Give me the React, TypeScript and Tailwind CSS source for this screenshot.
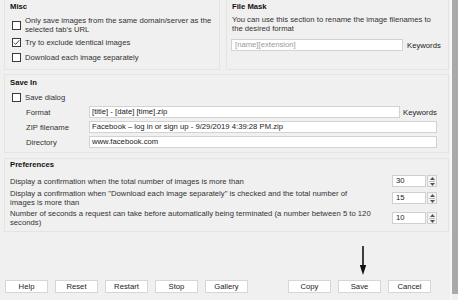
import React from "react";

function Check({ checked = false }: { checked?: boolean }) {
  return (
    <div className="w-[9px] h-[9px] shrink-0 border border-[#3a3a3a] bg-white flex items-center justify-center">
      {checked && (
        <svg width="7" height="7" viewBox="0 0 7 7">
          <path d="M0.8 3.6 L2.7 5.4 L6.3 1.2" fill="none" stroke="#333" strokeWidth="0.9" />
        </svg>
      )}
    </div>
  );
}

function Spin({ value }: { value: string }) {
  return (
    <div className="flex items-stretch h-[12px] w-[45px] shrink-0">
      <div className="w-[34px] border border-[#cfcfcf] bg-white pl-[3px] leading-[10px] text-[#222]">{value}</div>
      <div className="ml-[1px] w-[10px] border border-[#cfcfcf] bg-[#f4f4f4] flex flex-col items-center justify-center gap-[1px]">
        <svg width="5" height="3" viewBox="0 0 5 3"><path d="M0 3 L2.5 0 L5 3Z" fill="#555" /></svg>
        <div className="w-[6px] h-px bg-[#bbb]" />
        <svg width="5" height="3" viewBox="0 0 5 3"><path d="M0 0 L2.5 3 L5 0Z" fill="#555" /></svg>
      </div>
    </div>
  );
}

function Btn({ label }: { label: string }) {
  return (
    <div className="w-[43px] h-[13px] bg-white border border-[#d6d6d6] flex items-center justify-center text-[#222] leading-[11px]">
      {label}
    </div>
  );
}

export default function App() {
  return (
    <div className="w-[458px] h-[300px] bg-[#f0f0f0] flex overflow-hidden text-[7.7px] leading-[9px] text-[#333] font-[family-name:Liberation_Sans,Arial,sans-serif] relative">
      <div className="w-[450px] flex flex-col pl-[4px] pr-[1px]">
        {/* Top row */}
        <div className="flex gap-[6px] h-[70px]">
          <div className="w-[216px] border-b border-r border-l border-[#e4e4e4] pl-[5px]">
            <div className="mt-[2px] h-[10px] leading-[10px] font-bold text-[#111]">Misc</div>
            <div className="mt-[4px] flex items-center gap-[4px] pl-[2px]">
              <Check />
              <div className="whitespace-nowrap">
                Only save images from the same domain/server as the
                <br />
                selected tab's URL
              </div>
            </div>
            <div className="mt-[4px] flex items-center gap-[4px] pl-[2px] h-[9px]">
              <Check checked />
              <div className="whitespace-nowrap">Try to exclude identical images</div>
            </div>
            <div className="mt-[6px] flex items-center gap-[4px] pl-[2px] h-[9px]">
              <Check />
              <div className="whitespace-nowrap">Download each image separately</div>
            </div>
          </div>
          <div className="w-[223px] border-b border-r border-l border-[#e4e4e4] pl-[5px]">
            <div className="mt-[2px] h-[10px] leading-[10px] font-bold text-[#111]">File Mask</div>
            <div className="mt-[3px] whitespace-nowrap">
              You can use this section to rename the image filenames to
              <br />
              the desired format
            </div>
            <div className="mt-[6px] flex items-center gap-[4px] ml-[-1px]">
              <div className="w-[172px] h-[12px] bg-white border border-[#d2d2d2] pl-[3px] leading-[10px] text-[#9a9a9a]">
                [name][extension]
              </div>
              <div className="text-[#222]">Keywords</div>
            </div>
          </div>
        </div>

        {/* Save In */}
        <div className="mt-[4px] border border-[#e4e4e4] pl-[5px] pb-[4px]">
          <div className="mt-[3px] h-[10px] leading-[10px] font-bold text-[#111]">Save In</div>
          <div className="mt-[4px] h-[10px] flex items-center gap-[4px] pl-[2px]">
            <Check />
            <div>Save dialog</div>
          </div>
          <div className="mt-[4px] flex items-center h-[12px]">
            <div className="w-[79px] pl-[16px] shrink-0 whitespace-nowrap">Format</div>
            <div className="w-[311px] h-[12px] bg-white border border-[#d2d2d2] pl-[2px] leading-[10px] text-[#222] whitespace-nowrap">
              [title] - [date] [time].zip
            </div>
            <div className="ml-[3px] text-[#222]">Keywords</div>
          </div>
          <div className="mt-[3px] flex items-center h-[12px]">
            <div className="w-[79px] pl-[16px] shrink-0 whitespace-nowrap">ZIP filename</div>
            <div className="w-[348px] h-[12px] bg-white border border-[#d2d2d2] pl-[2px] leading-[10px] text-[#222] whitespace-nowrap">
              Facebook – log in or sign up - 9/29/2019 4:39:28 PM.zip
            </div>
          </div>
          <div className="mt-[3px] flex items-center h-[12px]">
            <div className="w-[79px] pl-[16px] shrink-0 whitespace-nowrap">Directory</div>
            <div className="w-[348px] h-[12px] bg-white border border-[#d2d2d2] pl-[2px] leading-[10px] text-[#222] whitespace-nowrap">
              www.facebook.com
            </div>
          </div>
        </div>

        {/* Preferences */}
        <div className="mt-[5px] border border-[#e4e4e4] pl-[5px] pr-[11px] pb-[4px]">
          <div className="mt-[1px] h-[9px] leading-[9px] font-bold text-[#111]">Preferences</div>
          <div className="mt-[6px] h-[12px] flex items-center justify-between">
            <div className="whitespace-nowrap">Display a confirmation when the total number of images is more than</div>
            <Spin value="30" />
          </div>
          <div className="mt-[2px] h-[18px] flex items-center justify-between">
            <div className="whitespace-nowrap">
              Display a confirmation when "Download each image separately" is checked and the total number of
              <br />
              images is more than
            </div>
            <Spin value="15" />
          </div>
          <div className="mt-[2px] h-[18px] flex items-center justify-between">
            <div className="whitespace-nowrap">
              Number of seconds a request can take before automatically being terminated (a number between 5 to 120
              <br />
              seconds)
            </div>
            <Spin value="10" />
          </div>
        </div>

        <div className="flex-1" />

        {/* Buttons */}
        <div className="mb-[7px] ml-[1px] flex items-center">
          <div className="flex gap-[7px]">
            <Btn label="Help" />
            <Btn label="Reset" />
            <Btn label="Restart" />
            <Btn label="Stop" />
            <Btn label="Gallery" />
          </div>
          <div className="ml-[40px] flex gap-[7px]">
            <Btn label="Copy" />
            <Btn label="Save" />
            <Btn label="Cancel" />
          </div>
        </div>
      </div>

      {/* scrollbar */}
      <div className="w-[2px] bg-[#f7f7f7]" />
      <div className="w-[6px] flex flex-col">
        <div className="flex-1 bg-[#a9a9a9]" />
        <div className="h-[6px] bg-[#f0f0f0]" />
      </div>

      {/* annotation arrow */}
      <svg className="absolute left-[358px] top-[246px]" width="10" height="30" viewBox="0 0 10 30">
        <path d="M5 0 L5 22" stroke="#111" strokeWidth="1.6" />
        <path d="M1.8 19 L5 29 L8.2 19 Z" fill="#111" />
      </svg>
    </div>
  );
}
